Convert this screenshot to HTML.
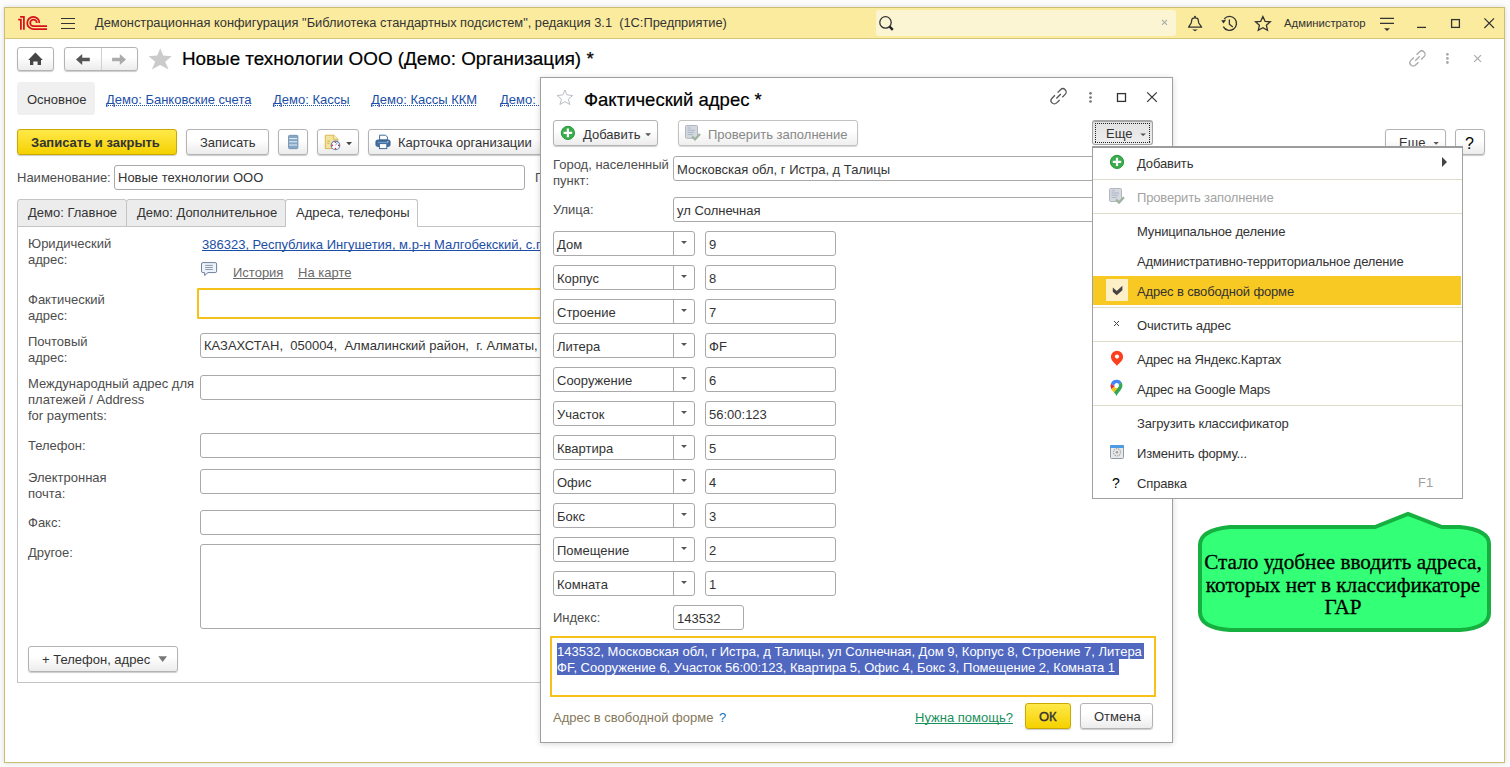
<!DOCTYPE html>
<html><head><meta charset="utf-8">
<style>
*{box-sizing:border-box;margin:0;padding:0}
html,body{width:1510px;height:767px;overflow:hidden;background:#fcfcfc;font-family:"Liberation Sans",sans-serif;font-size:13px;color:#4d4d4d;position:relative}
.a{position:absolute}
.t{position:absolute;white-space:pre;line-height:16px}
.btn{position:absolute;border:1px solid #b3b3b3;border-radius:3px;background:linear-gradient(#fff 40%,#ececec);box-shadow:0 1px 1px rgba(0,0,0,.2)}
.ybtn{position:absolute;border:1px solid #c9a800;border-radius:3px;background:linear-gradient(#ffe94a,#f5d100);box-shadow:0 1px 1px rgba(0,0,0,.2)}
.inp{position:absolute;border:1px solid #a9a9a9;border-radius:3px;background:#fff}
.lnk{color:#1b4ea6;text-decoration:underline;text-decoration-skip-ink:none}
.dot{color:#1b4ea6;background-image:linear-gradient(to right,#1b4ea6 50%,transparent 50%);background-size:2px 1px;background-repeat:repeat-x;background-position:0 13px}
.m{letter-spacing:-0.15px}
.gl{color:#6a6a6a;text-decoration:underline;text-decoration-skip-ink:none}
</style></head><body>
<div class="a" style="left:4px;top:7px;width:1501px;height:756px;background:#fff;border:1px solid #cbbd72;box-shadow:0 0 5px rgba(0,0,0,.14)"></div>
<div class="a" style="left:5px;top:8px;width:1499px;height:31px;background:#fbeb9f;border-bottom:1px solid #d9c57a"></div>

<div class="t" style="left:95px;top:15px;color:#333;font-size:12.85px">Демонстрационная конфигурация "Библиотека стандартных подсистем", редакция 3.1  (1С:Предприятие)</div>
<div class="a" style="left:876px;top:10px;width:300px;height:26px;background:#fcf5d4;border-radius:3px"></div>
<div class="t" style="left:1284px;top:15px;color:#333;font-size:11.3px">Администратор</div>

<!-- title row -->
<div class="btn" style="left:17px;top:47px;width:37px;height:24px"></div>
<div class="btn" style="left:64px;top:47px;width:74px;height:24px"></div>
<div class="a" style="left:101px;top:48px;width:1px;height:22px;background:#d0d0d0"></div>
<div class="t" style="left:182px;top:48px;font-size:18.85px;line-height:22px;color:#000;-webkit-text-stroke:.2px #000">Новые технологии ООО (Демо: Организация) *</div>

<!-- nav tabs -->
<div class="a" style="left:17px;top:82px;width:78px;height:33px;background:#f0f0f0;border-radius:3px"></div>
<div class="t" style="left:27px;top:92px;color:#333">Основное</div>
<div class="t dot" style="left:106px;top:92px">Демо: Банковские счета</div>
<div class="t dot" style="left:273px;top:92px">Демо: Кассы</div>
<div class="t dot" style="left:371px;top:92px">Демо: Кассы ККМ</div>
<div class="t dot" style="left:500px;top:92px">Демо: Кассы ККМ</div>

<!-- command bar -->
<div class="ybtn" style="left:17px;top:129px;width:160px;height:26px"></div>
<div class="t" style="left:31px;top:135px;font-weight:bold;color:#333">Записать и закрыть</div>
<div class="btn" style="left:186px;top:129px;width:83px;height:26px"></div>
<div class="t" style="left:200px;top:135px;color:#333">Записать</div>
<div class="btn" style="left:278px;top:129px;width:30px;height:26px"></div>
<div class="btn" style="left:317px;top:129px;width:42px;height:26px"></div>
<div class="btn" style="left:368px;top:129px;width:200px;height:26px"></div>
<div class="t" style="left:398px;top:135px;color:#333">Карточка организации</div>
<div class="btn" style="left:1385px;top:129px;width:61px;height:26px"></div>
<div class="t" style="left:1399px;top:135px;color:#333">Еще</div>
<div class="btn" style="left:1455px;top:129px;width:30px;height:26px"></div>
<div class="t" style="left:1465px;top:136px;color:#000;font-size:16px">?</div>

<!-- name -->
<div class="t" style="left:17px;top:170px">Наименование:</div>
<div class="inp" style="left:114px;top:165px;width:411px;height:25px"></div>
<div class="t" style="left:118px;top:170px;color:#333">Новые технологии ООО</div>
<div class="t" style="left:535px;top:170px">Г</div>

<!-- form tabs -->
<div class="a" style="left:17px;top:226px;width:1001px;height:457px;border:1px solid #c4c4c4"></div>
<div class="a" style="left:17px;top:199px;width:110px;height:28px;background:#ececec;border:1px solid #c4c4c4;border-radius:3px 3px 0 0"></div>
<div class="t" style="left:28px;top:205px;color:#333">Демо: Главное</div>
<div class="a" style="left:126px;top:199px;width:160px;height:28px;background:#ececec;border:1px solid #c4c4c4;border-radius:3px 3px 0 0"></div>
<div class="t" style="left:137px;top:205px;color:#333">Демо: Дополнительное</div>
<div class="a" style="left:285px;top:199px;width:133px;height:28px;background:#fff;border:1px solid #c4c4c4;border-bottom:none;border-radius:3px 3px 0 0"></div>
<div class="t" style="left:296px;top:205px;color:#333">Адреса, телефоны</div>

<!-- address rows -->
<div class="t" style="left:28px;top:236px">Юридический
адрес:</div>
<div class="t lnk" style="left:202px;top:237px">386323, Республика Ингушетия, м.р-н Малгобекский, с.п</div>
<div class="t gl" style="left:233px;top:265px">История</div>
<div class="t gl" style="left:298px;top:265px">На карте</div>
<div class="t" style="left:28px;top:292px">Фактический
адрес:</div>
<div class="a" style="left:197px;top:288px;width:400px;height:31px;border:2px solid #f6c21a;border-radius:1px"></div>
<div class="t" style="left:28px;top:334px">Почтовый
адрес:</div>
<div class="inp" style="left:200px;top:333px;width:400px;height:25px"></div>
<div class="t" style="left:204px;top:338px;color:#333">КАЗАХСТАН,  050004,  Алмалинский район,  г. Алматы,</div>
<div class="t" style="left:28px;top:376px">Международный адрес для
платежей / Address
for payments:</div>
<div class="inp" style="left:200px;top:375px;width:400px;height:25px"></div>
<div class="t" style="left:28px;top:438px">Телефон:</div>
<div class="inp" style="left:200px;top:433px;width:400px;height:25px"></div>
<div class="t" style="left:28px;top:470px">Электронная
почта:</div>
<div class="inp" style="left:200px;top:469px;width:400px;height:25px"></div>
<div class="t" style="left:28px;top:515px">Факс:</div>
<div class="inp" style="left:200px;top:510px;width:400px;height:25px"></div>
<div class="t" style="left:28px;top:545px">Другое:</div>
<div class="inp" style="left:200px;top:544px;width:400px;height:85px"></div>
<div class="btn" style="left:28px;top:646px;width:150px;height:26px"></div>
<div class="t" style="left:42px;top:652px;color:#333">+ Телефон, адрес</div>

<svg class="a" style="left:0;top:0" width="1510" height="767" viewBox="0 0 1510 767">
 <!-- 1C logo -->
 <g fill="none" stroke="#d7121b" stroke-width="1.75" stroke-linecap="butt">
  <path d="M18.2 19.6 H20.9 V29.8"/>
  <path d="M20.1 16.9 H23.9 V29.8"/>
  <path d="M47 29 H33.3 A6.1 6.1 0 1 1 39.4 22.9"/>
  <path d="M47 26.2 H33.5 A3.3 3.3 0 1 1 36.8 22.9"/>
 </g>
 <!-- hamburger -->
 <g stroke="#333" stroke-width="1.1"><path d="M61 18.5H75M61 23.5H75M61 28.5H75"/></g>
 <!-- search -->
 <circle cx="885.5" cy="22.4" r="5.7" fill="none" stroke="#333" stroke-width="1.3"/>
 <path d="M889.6 26.6 L892.8 29.8" stroke="#222" stroke-width="2.4"/>
 <path d="M1162 19.8 L1167 24.8 M1167 19.8 L1162 24.8" stroke="#aaa" stroke-width="1.1"/>
 <!-- bell -->
 <g fill="none" stroke="#333" stroke-width="1.3" stroke-linejoin="round">
  <path d="M1188.6 27.2 H1201.6 L1198.8 23 C1198.3 21.8 1198.6 19 1197.4 18.4 C1196.3 17.6 1193.7 17.6 1192.6 18.4 C1191.4 19 1191.7 21.8 1191.2 23 Z"/>
 </g>
 <circle cx="1195" cy="16.8" r="1" fill="#333"/>
 <path d="M1192.2 29.5 H1197.8 L1195 31.2 Z" fill="#333"/>
 <!-- history -->
 <g fill="none" stroke="#333" stroke-width="1.3">
  <path d="M1223.3 26.6 A7 7 0 1 0 1224.2 18.8"/>
  <path d="M1229.4 19.4 V24.2 L1232.8 27"/>
 </g>
 <path d="M1221.2 20.6 L1226.2 19.5 L1223.6 23.6 Z" fill="#333"/>
 <!-- star -->
 <path d="M1262.9 16.5 L1265.1 21.3 L1270.3 21.8 L1266.4 25.3 L1267.5 30.3 L1262.9 27.7 L1258.3 30.3 L1259.4 25.3 L1255.5 21.8 L1260.7 21.3 Z" fill="none" stroke="#333" stroke-width="1.3" stroke-linejoin="miter"/>
 <!-- filter -->
 <path d="M1380 18.3H1394M1380 23.3H1394" stroke="#333" stroke-width="1.2"/>
 <path d="M1384 28.2 H1390 L1387 30.9 Z" fill="#333"/>
 <!-- min max close -->
 <path d="M1417 27.4H1426" stroke="#333" stroke-width="1.3"/>
 <rect x="1451.6" y="19.6" width="7.8" height="7.8" fill="none" stroke="#333" stroke-width="1.3"/>
 <path d="M1484.4 18.4 L1494 28 M1494 18.4 L1484.4 28" stroke="#333" stroke-width="1.2"/>
 <!-- home -->
 <path d="M35.4 52.6 L28.2 59.9 H30 V65 H33.3 V61.6 H37.6 V65 H41 V59.9 H42.8 Z" fill="#454545"/>
 <!-- back / fwd -->
 <path d="M76 59.4 L82.2 54 V57.7 H89.8 V61.2 H82.2 V64.9 Z" fill="#555"/>
 <path d="M126 59.4 L119.8 54 V57.7 H112.1 V61.2 H119.8 V64.9 Z" fill="#ababab"/>
 <!-- big star -->
 <path d="M160.2 48.2 L163.2 55.6 L171.8 56.3 L165.2 61.7 L168.6 69.6 L160.2 65 L151.8 69.6 L155.2 61.7 L148.6 56.3 L157.2 55.6 Z" fill="#cbcbcb"/>
 <!-- link dots close (main) -->
 <g transform="translate(1417.5,58.5) rotate(-45)" fill="none" stroke="#a8a8a8" stroke-width="1.3"><path d="M1.9,-3.3 H6 A3.3,3.3 0 0 1 6,3.3 H1.9"/><path d="M-3.2,0 H3.2"/><path d="M-1.9,-3.3 H-6 A3.3,3.3 0 0 0 -6,3.3 H-1.9"/></g>
 <circle cx="1447.4" cy="54.3" r="1.4" fill="#a8a8a8"/><circle cx="1447.4" cy="58.4" r="1.4" fill="#a8a8a8"/><circle cx="1447.4" cy="62.5" r="1.4" fill="#a8a8a8"/>
 <path d="M1474.2 55.1 L1481 61.9 M1481 55.1 L1474.2 61.9" stroke="#a8a8a8" stroke-width="1.1"/>
 <!-- list icon -->
 <rect x="288.5" y="135.3" width="9.4" height="13.4" rx="1.2" fill="#86a6c6" stroke="#6a8aac" stroke-width=".8"/>
 <path d="M289.2 138.6H297.2M289.2 141.8H297.2M289.2 145H297.2" stroke="#e8f0f8" stroke-width="1"/>
 <!-- report icon -->
 <path d="M325.3 135.2 H333.8 L337.8 139.2 V148.6 H325.3 Z" fill="#f6e39a" stroke="#d6b04a" stroke-width=".9"/>
 <path d="M333.8 135.2 V139.2 H337.8" fill="#fff6d0" stroke="#d6b04a" stroke-width=".9"/>
 <path d="M327.3 141.2H330M327.3 143.3H329.5" stroke="#c8a450" stroke-width=".8"/>
 <circle cx="335.5" cy="145.4" r="4.3" fill="#fff" stroke="#5a86c0" stroke-width="1.1"/>
 <circle cx="335.5" cy="142.2" r=".8" fill="#e02020"/><circle cx="335.5" cy="148.6" r=".8" fill="#e02020"/><circle cx="332.3" cy="145.4" r=".8" fill="#e02020"/><circle cx="338.7" cy="145.4" r=".8" fill="#e02020"/>
 <path d="M335.5 145.4 L337.4 142.6" stroke="#5a86c0" stroke-width=".8"/>
 <path d="M346.2 142 H352 L349.1 145.2 Z" fill="#444"/>
 <!-- printer -->
 <path d="M379.6 135.2 H385.6 L387.4 137 V140 H379.6 Z" fill="#fff" stroke="#3f6a9c" stroke-width="1"/>
 <rect x="375.9" y="140" width="14.2" height="6.4" rx="1.6" fill="#44709f" stroke="#345a86" stroke-width=".8"/>
 <rect x="379.4" y="143.6" width="7.4" height="5" fill="#fff" stroke="#3f6a9c" stroke-width="1"/>
 <circle cx="387.8" cy="141.8" r=".6" fill="#fff"/>
 <path d="M378 142.4 H388" stroke="#9fc0e0" stroke-width=".6"/>
 <!-- comment icon -->
 <path d="M202.9 262.6 H215.2 Q216.6 262.6 216.6 264 V271.2 Q216.6 272.6 215.2 272.6 H208 L204.6 275.5 V272.6 H202.9 Q201.5 272.6 201.5 271.2 V264 Q201.5 262.6 202.9 262.6 Z" fill="#eef3f9" stroke="#6d829b" stroke-width="1"/>
 <path d="M205.2 265.4H212.8M205.2 267.5H212.8M205.2 269.5H212.8" stroke="#7a8ea6" stroke-width=".9"/>
 <!-- + Телефон arrow -->
 <path d="M158.3 656.2 H167 L162.65 662 Z" fill="#777"/>
 <path d="M1433.5 142.1 H1438.8 L1436.15 144.8 Z" fill="#555"/>
</svg>
<!-- DIALOG -->
<div class="a" style="left:540px;top:77px;width:633px;height:666px;background:#fff;border:1px solid #a0a0a0;box-shadow:0 1px 6px rgba(0,0,0,.16)"></div>
<div class="t" style="left:584px;top:89px;font-size:18.5px;line-height:22px;color:#000;-webkit-text-stroke:.2px #000">Фактический адрес *</div>
<div class="btn" style="left:553px;top:120px;width:105px;height:26px"></div>
<div class="t" style="left:583px;top:127px;color:#333">Добавить</div>
<div class="btn" style="left:678px;top:120px;width:180px;height:26px;opacity:.8"></div>
<div class="t" style="left:708px;top:127px;color:#888">Проверить заполнение</div>
<div class="a" style="left:1092px;top:120px;width:61px;height:25px;border:1px solid #a0a0a0;border-top:2px solid #a6a6a6;border-radius:3px;background:linear-gradient(#e2e2e2,#efefef)"></div><div class="a" style="left:1095px;top:123px;width:55px;height:1px;background:repeating-linear-gradient(to right,#222 0 1px,transparent 1px 2px)"></div><div class="a" style="left:1095px;top:142px;width:55px;height:1px;background:repeating-linear-gradient(to right,#222 0 1px,transparent 1px 2px)"></div><div class="a" style="left:1095px;top:123px;width:1px;height:20px;background:repeating-linear-gradient(to bottom,#222 0 1px,transparent 1px 2px)"></div><div class="a" style="left:1149px;top:123px;width:1px;height:20px;background:repeating-linear-gradient(to bottom,#222 0 1px,transparent 1px 2px)"></div>
<div class="t" style="left:1106px;top:126px;color:#333">Еще</div>

<div class="t" style="left:553px;top:157px">Город, населенный
пункт:</div>
<div class="inp" style="left:673px;top:156px;width:484px;height:25px"></div>
<div class="t" style="left:677px;top:162px;color:#333">Московская обл, г Истра, д Талицы</div>
<div class="t" style="left:553px;top:202px">Улица:</div>
<div class="inp" style="left:673px;top:197px;width:484px;height:25px"></div>
<div class="t" style="left:677px;top:203px;color:#333">ул Солнечная</div>
<div class="inp" style="left:553px;top:231px;width:142px;height:25px"></div>
<div class="a" style="left:673px;top:232px;width:1px;height:23px;background:#a9a9a9"></div>
<div class="a" style="left:681px;top:241px;width:0;height:0;border-left:3px solid transparent;border-right:3px solid transparent;border-top:3px solid #555"></div>
<div class="t" style="left:557px;top:237px;color:#333">Дом</div>
<div class="inp" style="left:705px;top:231px;width:131px;height:25px"></div>
<div class="t" style="left:709px;top:237px;color:#333">9</div>
<div class="inp" style="left:553px;top:265px;width:142px;height:25px"></div>
<div class="a" style="left:673px;top:266px;width:1px;height:23px;background:#a9a9a9"></div>
<div class="a" style="left:681px;top:275px;width:0;height:0;border-left:3px solid transparent;border-right:3px solid transparent;border-top:3px solid #555"></div>
<div class="t" style="left:557px;top:271px;color:#333">Корпус</div>
<div class="inp" style="left:705px;top:265px;width:131px;height:25px"></div>
<div class="t" style="left:709px;top:271px;color:#333">8</div>
<div class="inp" style="left:553px;top:299px;width:142px;height:25px"></div>
<div class="a" style="left:673px;top:300px;width:1px;height:23px;background:#a9a9a9"></div>
<div class="a" style="left:681px;top:309px;width:0;height:0;border-left:3px solid transparent;border-right:3px solid transparent;border-top:3px solid #555"></div>
<div class="t" style="left:557px;top:305px;color:#333">Строение</div>
<div class="inp" style="left:705px;top:299px;width:131px;height:25px"></div>
<div class="t" style="left:709px;top:305px;color:#333">7</div>
<div class="inp" style="left:553px;top:333px;width:142px;height:25px"></div>
<div class="a" style="left:673px;top:334px;width:1px;height:23px;background:#a9a9a9"></div>
<div class="a" style="left:681px;top:343px;width:0;height:0;border-left:3px solid transparent;border-right:3px solid transparent;border-top:3px solid #555"></div>
<div class="t" style="left:557px;top:339px;color:#333">Литера</div>
<div class="inp" style="left:705px;top:333px;width:131px;height:25px"></div>
<div class="t" style="left:709px;top:339px;color:#333">ФF</div>
<div class="inp" style="left:553px;top:367px;width:142px;height:25px"></div>
<div class="a" style="left:673px;top:368px;width:1px;height:23px;background:#a9a9a9"></div>
<div class="a" style="left:681px;top:377px;width:0;height:0;border-left:3px solid transparent;border-right:3px solid transparent;border-top:3px solid #555"></div>
<div class="t" style="left:557px;top:373px;color:#333">Сооружение</div>
<div class="inp" style="left:705px;top:367px;width:131px;height:25px"></div>
<div class="t" style="left:709px;top:373px;color:#333">6</div>
<div class="inp" style="left:553px;top:401px;width:142px;height:25px"></div>
<div class="a" style="left:673px;top:402px;width:1px;height:23px;background:#a9a9a9"></div>
<div class="a" style="left:681px;top:411px;width:0;height:0;border-left:3px solid transparent;border-right:3px solid transparent;border-top:3px solid #555"></div>
<div class="t" style="left:557px;top:407px;color:#333">Участок</div>
<div class="inp" style="left:705px;top:401px;width:131px;height:25px"></div>
<div class="t" style="left:709px;top:407px;color:#333">56:00:123</div>
<div class="inp" style="left:553px;top:435px;width:142px;height:25px"></div>
<div class="a" style="left:673px;top:436px;width:1px;height:23px;background:#a9a9a9"></div>
<div class="a" style="left:681px;top:445px;width:0;height:0;border-left:3px solid transparent;border-right:3px solid transparent;border-top:3px solid #555"></div>
<div class="t" style="left:557px;top:441px;color:#333">Квартира</div>
<div class="inp" style="left:705px;top:435px;width:131px;height:25px"></div>
<div class="t" style="left:709px;top:441px;color:#333">5</div>
<div class="inp" style="left:553px;top:469px;width:142px;height:25px"></div>
<div class="a" style="left:673px;top:470px;width:1px;height:23px;background:#a9a9a9"></div>
<div class="a" style="left:681px;top:479px;width:0;height:0;border-left:3px solid transparent;border-right:3px solid transparent;border-top:3px solid #555"></div>
<div class="t" style="left:557px;top:475px;color:#333">Офис</div>
<div class="inp" style="left:705px;top:469px;width:131px;height:25px"></div>
<div class="t" style="left:709px;top:475px;color:#333">4</div>
<div class="inp" style="left:553px;top:503px;width:142px;height:25px"></div>
<div class="a" style="left:673px;top:504px;width:1px;height:23px;background:#a9a9a9"></div>
<div class="a" style="left:681px;top:513px;width:0;height:0;border-left:3px solid transparent;border-right:3px solid transparent;border-top:3px solid #555"></div>
<div class="t" style="left:557px;top:509px;color:#333">Бокс</div>
<div class="inp" style="left:705px;top:503px;width:131px;height:25px"></div>
<div class="t" style="left:709px;top:509px;color:#333">3</div>
<div class="inp" style="left:553px;top:537px;width:142px;height:25px"></div>
<div class="a" style="left:673px;top:538px;width:1px;height:23px;background:#a9a9a9"></div>
<div class="a" style="left:681px;top:547px;width:0;height:0;border-left:3px solid transparent;border-right:3px solid transparent;border-top:3px solid #555"></div>
<div class="t" style="left:557px;top:543px;color:#333">Помещение</div>
<div class="inp" style="left:705px;top:537px;width:131px;height:25px"></div>
<div class="t" style="left:709px;top:543px;color:#333">2</div>
<div class="inp" style="left:553px;top:571px;width:142px;height:25px"></div>
<div class="a" style="left:673px;top:572px;width:1px;height:23px;background:#a9a9a9"></div>
<div class="a" style="left:681px;top:581px;width:0;height:0;border-left:3px solid transparent;border-right:3px solid transparent;border-top:3px solid #555"></div>
<div class="t" style="left:557px;top:577px;color:#333">Комната</div>
<div class="inp" style="left:705px;top:571px;width:131px;height:25px"></div>
<div class="t" style="left:709px;top:577px;color:#333">1</div>

<div class="t" style="left:553px;top:610px">Индекс:</div>
<div class="inp" style="left:673px;top:605px;width:71px;height:25px"></div>
<div class="t" style="left:677px;top:611px;color:#333">143532</div>
<div class="a" style="left:550px;top:636px;width:606px;height:61px;border:2px solid #f6c21a"></div>
<div class="a" style="left:557px;top:643px;width:587px;height:16px;background:#5068c0"></div>
<div class="a" style="left:557px;top:659px;width:562px;height:16px;background:#5068c0"></div>
<div class="t" style="left:557px;top:644px;color:#fff">143532, Московская обл, г Истра, д Талицы, ул Солнечная, Дом 9, Корпус 8, Строение 7, Литера
ФF, Сооружение 6, Участок 56:00:123, Квартира 5, Офис 4, Бокс 3, Помещение 2, Комната 1</div>
<div class="t" style="left:553px;top:710px;color:#85785a">Адрес в свободной форме</div>
<div class="t" style="left:719px;top:710px;color:#1a6fc0">?</div>
<div class="t" style="left:915px;top:710px;color:#17905a;text-decoration:underline;text-decoration-skip-ink:none">Нужна помощь?</div>
<div class="ybtn" style="left:1025px;top:703px;width:46px;height:26px"></div>
<div class="t" style="left:1039px;top:709px;color:#333;-webkit-text-stroke:.4px #333">ОК</div>
<div class="btn" style="left:1080px;top:703px;width:73px;height:26px"></div>
<div class="t" style="left:1094px;top:709px;color:#333">Отмена</div>

<svg class="a" style="left:0;top:0" width="1510" height="767" viewBox="0 0 1510 767">
 <path d="M564.9 90 L566.9 94.8 L572.6 95.6 L568.3 99.2 L569.9 104.5 L564.9 101.6 L559.9 104.5 L561.5 99.2 L557.2 95.6 L562.9 94.8 Z" fill="none" stroke="#b9bdc4" stroke-width="1"/>
 <g transform="translate(1058.6,96.3) rotate(-45)" fill="none" stroke="#555" stroke-width="1.3"><path d="M1.9,-3.3 H6 A3.3,3.3 0 0 1 6,3.3 H1.9"/><path d="M-3.2,0 H3.2"/><path d="M-1.9,-3.3 H-6 A3.3,3.3 0 0 0 -6,3.3 H-1.9"/></g>
 <circle cx="1090.5" cy="93.3" r="1.35" fill="#777"/><circle cx="1090.5" cy="97.5" r="1.35" fill="#777"/><circle cx="1090.5" cy="101.5" r="1.35" fill="#777"/>
 <rect x="1117.5" y="93.6" width="8" height="7.8" fill="none" stroke="#333" stroke-width="1.3"/>
 <path d="M1147.2 92.3 L1156.8 101.9 M1156.8 92.3 L1147.2 101.9" stroke="#333" stroke-width="1.2"/>
 <!-- plus btn icon -->
 <circle cx="567.9" cy="132.9" r="6.6" fill="#3aac4c" stroke="#279a3a" stroke-width="1"/>
 <path d="M563.6 132.9H572.2M567.9 128.6V137.2" stroke="#fff" stroke-width="2.2"/>
 <path d="M645.2 133.3 H651 L648.1 136.2 Z" fill="#555"/>
 <!-- check doc icon -->
 <rect x="685.5" y="125.5" width="12" height="12.8" rx="1" fill="#d5d9df" stroke="#a9b1ba" stroke-width=".9"/>
 <path d="M687.5 128H691M687.5 130.2H695M687.5 132.4H694M687.5 134.6H693" stroke="#9aa8c0" stroke-width=".7"/>
 <path d="M692.2 136.4 L695 139.4 L700 134" fill="none" stroke="#9fb29f" stroke-width="2.2"/>
 <!-- rows arrows drawn in html -->
 <path d="M1140.2 133.4 H1146 L1143.1 136 Z" fill="#555"/>
 
</svg>
<!-- MENU -->
<div class="a" style="left:1092px;top:146px;width:371px;height:353px;background:#fff;border:1px solid #a0a0a0;border-top:2px solid #9c9c9c"></div>

<div class="a" style="left:1093px;top:179px;width:369px;height:1px;background:#e0dccb"></div>
<div class="a" style="left:1093px;top:213px;width:369px;height:1px;background:#e0dccb"></div>
<div class="a" style="left:1093px;top:276px;width:368px;height:29px;background:#f9c923"></div>
<div class="a" style="left:1106px;top:279px;width:22px;height:22px;background:#fdefc6"></div>
<div class="a" style="left:1093px;top:307px;width:369px;height:1px;background:#e0dccb"></div>
<div class="a" style="left:1093px;top:341px;width:369px;height:1px;background:#e0dccb"></div>
<div class="a" style="left:1093px;top:405px;width:369px;height:1px;background:#e0dccb"></div>
<div class="t m" style="left:1137px;top:156px;color:#333">Добавить</div>
<div class="t m" style="left:1137px;top:190px;color:#a3a3a3">Проверить заполнение</div>
<div class="t m" style="left:1137px;top:224px;color:#333">Муниципальное деление</div>
<div class="t m" style="left:1137px;top:254px;color:#333">Административно-территориальное деление</div>
<div class="t m" style="left:1137px;top:284px;color:#333">Адрес в свободной форме</div>
<div class="t m" style="left:1137px;top:318px;color:#333">Очистить адрес</div>
<div class="t m" style="left:1137px;top:352px;color:#333">Адрес на Яндекс.Картах</div>
<div class="t m" style="left:1137px;top:382px;color:#333">Адрес на Google Maps</div>
<div class="t m" style="left:1137px;top:416px;color:#333">Загрузить классификатор</div>
<div class="t m" style="left:1137px;top:446px;color:#333">Изменить форму...</div>
<div class="t m" style="left:1137px;top:476px;color:#333">Справка</div>
<div class="t" style="left:1418px;top:475px;color:#a0a0a0">F1</div>
<div class="t" style="left:1112px;top:475px;color:#000;font-size:14px">?</div>
<svg class="a" style="left:0;top:0" width="1510" height="767" viewBox="0 0 1510 767">
 <circle cx="1117" cy="161.9" r="6.6" fill="#3aac4c" stroke="#279a3a" stroke-width="1"/>
 <path d="M1112.8 161.9H1121.2M1117 157.7V166.1" stroke="#fff" stroke-width="2.2"/>
 <rect x="1109.5" y="188.5" width="12" height="13" rx="1" fill="#d5d9df" stroke="#a9b1ba" stroke-width=".9"/>
 <path d="M1111.5 190.8H1115M1111.5 193H1119M1111.5 195.2H1118M1111.5 197.4H1117" stroke="#9aa8c0" stroke-width=".7"/>
 <path d="M1116.2 199.5 L1119 202.6 L1124 197.2" fill="none" stroke="#9fb29f" stroke-width="2.2"/>
 <path d="M1112.8 287.6 L1116.7 291 L1122.4 285.8 V290.2 L1116.7 295.2 L1112.8 291.8 Z" fill="#444"/>
 <path d="M1114 321 L1119 326 M1119 321 L1114 326" stroke="#444" stroke-width="1"/>
 <path d="M1117 366 C1115.6 363.6 1110.9 361.2 1110.9 356.8 A6.1 6.1 0 0 1 1123.1 356.8 C1123.1 361.2 1118.4 363.6 1117 366 Z" fill="#fc3f1d"/>
 <circle cx="1117" cy="356.6" r="2.1" fill="#fff"/>
 <!-- google pin -->
 <path d="M1116.6 379.8 A5.8 5.8 0 0 0 1110.9 383.6 L1114.6 386.4 A2.2 2.2 0 0 1 1118.8 384.4 L1121.6 382.2 A5.8 5.8 0 0 0 1116.6 379.8 Z" fill="#4285f4"/>
 <path d="M1110.9 383.6 A5.8 5.8 0 0 0 1111.4 389.2 L1114.6 386.4 Z" fill="#db3236"/>
 <path d="M1111.4 389.2 C1112.2 390.5 1113.2 391.5 1114 392.6 L1117.8 388 A2.2 2.2 0 0 1 1114.6 386.4 Z" fill="#f4c20d"/>
 <path d="M1121.6 382.2 A5.8 5.8 0 0 1 1122.4 385.6 C1122.4 389.5 1118.2 392 1116.6 396 C1115.8 394.6 1115 393.6 1114 392.6 L1118.8 386.6 A2.2 2.2 0 0 0 1118.8 384.4 Z" fill="#34a853"/>
 <!-- change form -->
 <rect x="1110.5" y="445.5" width="13" height="13" rx="1" fill="#e9e9e9" stroke="#8c9aa8" stroke-width="1"/>
 <rect x="1110" y="445" width="14" height="3" rx="1" fill="#4d9be3"/>
 <circle cx="1117" cy="452.3" r="3.6" fill="none" stroke="#a8a8a8" stroke-width="1.2" stroke-dasharray="1.4 .8"/>
 <circle cx="1117" cy="452.3" r="1.3" fill="#a0a0a0"/>
</svg>
<div class="a" style="left:1442px;top:157px;width:0;height:0;border-top:5px solid transparent;border-bottom:5px solid transparent;border-left:5px solid #444"></div>

<svg class="a" style="left:1190px;top:505px" width="310" height="135" viewBox="1190 505 310 135">
 <path d="M1230 527 H1375 L1408 514 L1442 527 H1460 Q1490 530 1489 545 V612 Q1490 628 1460 630 H1230 Q1200 628 1200 612 V545 Q1200 530 1230 527 Z" fill="#33ff77" stroke="#15b040" stroke-width="4"/>
</svg>
<div class="a" style="left:1197px;top:551px;width:292px;text-align:center;font-family:'Liberation Serif',serif;font-size:21.2px;line-height:22.6px;color:#000;-webkit-text-stroke:.3px #000">Стало удобнее вводить адреса,<br>которых нет в классификаторе<br>ГАР</div>
</body></html>
